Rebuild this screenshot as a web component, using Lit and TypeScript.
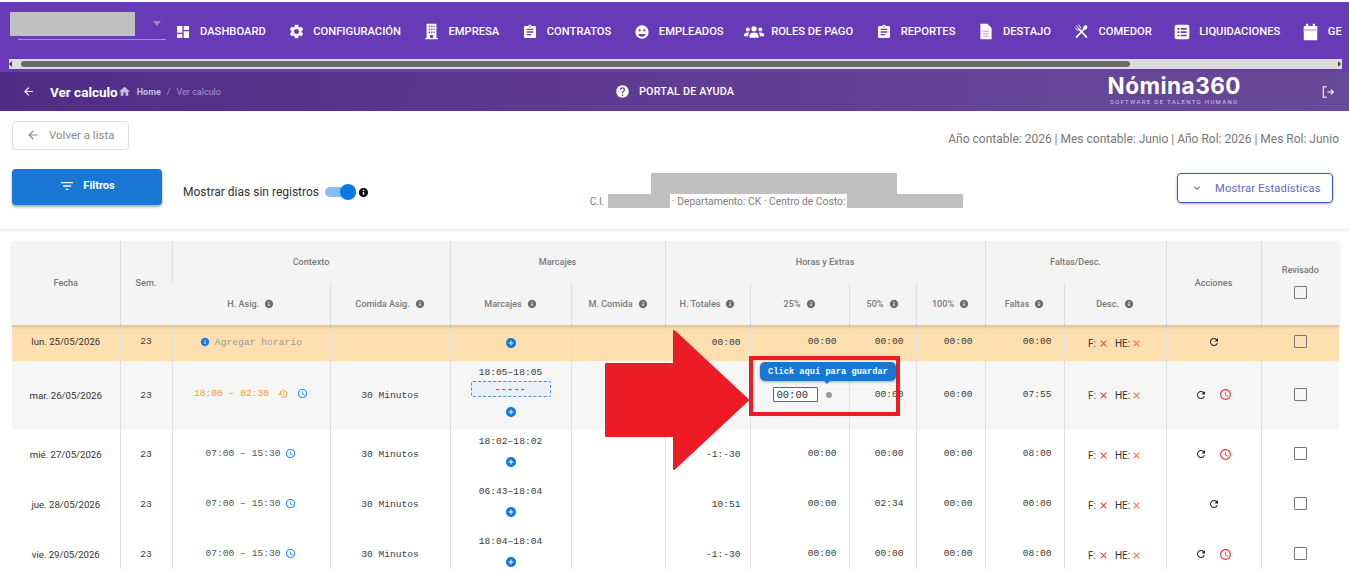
import {LitElement, html, css, svg} from 'lit';
import {customElement} from 'lit/decorators.js';

const P = {
  dashboard: 'M3 13h8V3H3v10zm0 8h8v-6H3v6zm10 0h8V11h-8v10zm0-18v6h8V3h-8z',
  cog: 'M19.14 12.94c.04-.3.06-.61.06-.94 0-.32-.02-.64-.07-.94l2.03-1.58a.49.49 0 0 0 .12-.61l-1.92-3.32a.488.488 0 0 0-.59-.22l-2.39.96c-.5-.38-1.03-.7-1.62-.94l-.36-2.54a.484.484 0 0 0-.48-.41h-3.84c-.24 0-.43.17-.47.41l-.36 2.54c-.59.24-1.13.57-1.62.94l-2.39-.96c-.22-.08-.47 0-.59.22L2.74 8.87c-.12.21-.08.47.12.61l2.03 1.58c-.05.3-.09.63-.09.94s.02.64.07.94l-2.03 1.58a.49.49 0 0 0-.12.61l1.92 3.32c.12.22.37.29.59.22l2.39-.96c.5.38 1.03.7 1.62.94l.36 2.54c.05.24.24.41.48.41h3.84c.24 0 .44-.17.47-.41l.36-2.54c.59-.24 1.13-.56 1.62-.94l2.39.96c.22.08.47 0 .59-.22l1.92-3.32c.12-.22.07-.47-.12-.61l-2.01-1.58zM12 15.6c-1.98 0-3.6-1.62-3.6-3.6s1.62-3.6 3.6-3.6 3.6 1.62 3.6 3.6-1.62 3.6-3.6 3.6z',
  building: 'M5 1h14v20h2v2H3v-2h2V1zm3 3v2h2V4H8zm3.5 0v2h2V4h-2zM15 4v2h1.500V4H15zM8 8v2h2V8H8zm3.500 0v2h2V8h-2zM15 8v2h1.500V8H15zm-7 4v2h2v-2H8zm3.500 0v2h2v-2h-2zm3.500 0v2h1.500v-2H15zm-5 5v4h4v-4h-4z',
  clipboard: 'M19 3h-4.180C14.400 1.840 13.300 1 12 1c-1.300 0-2.400.840-2.820 2H5c-1.100 0-2 .900-2 2v14c0 1.100.900 2 2 2h14c1.100 0 2-.900 2-2V5c0-1.100-.900-2-2-2zm-7 0c.550 0 1 .450 1 1s-.450 1-1 1-1-.450-1-1 .450-1 1-1zm2 14H7v-2h7v2zm3-4H7v-2h10v2zm0-4H7V7h10v2z',
  face: 'M12 2a10 10 0 1 0 0 20 10 10 0 0 0 0-20zM8.500 8a1.700 1.700 0 1 1 0 3.400 1.700 1.700 0 0 1 0-3.400zm7 0a1.700 1.700 0 1 1 0 3.400 1.700 1.700 0 0 1 0-3.400zM12 19c-2.600 0-4.800-1.600-5.700-4h11.400c-.9 2.400-3.100 4-5.700 4z',
  users: 'M12 5a3.200 3.200 0 1 1 0 6.400A3.200 3.200 0 0 1 12 5zM4.500 6.500a2.500 2.500 0 1 1 0 5 2.500 2.500 0 0 1 0-5zm15 0a2.500 2.500 0 1 1 0 5 2.500 2.500 0 0 1 0-5zM12 12.500c3 0 5.500 1.500 5.500 3.800V19h-11v-2.700c0-2.300 2.500-3.800 5.500-3.800zM4.500 12.500c.7 0 1.300.1 1.900.3-1 .8-1.400 2-1.400 3.500V17H0v-1.500c0-1.800 2-3 4.500-3zm15 0c2.500 0 4.500 1.200 4.500 3V17h-5v-.7c0-1.500-.4-2.700-1.400-3.500.6-.2 1.200-.3 1.900-.3z',
  help: 'M12 2C6.480 2 2 6.480 2 12s4.480 10 10 10 10-4.480 10-10S17.520 2 12 2zm1 17h-2v-2h2v2zm2.070-7.750l-.900.920C13.450 12.900 13 13.500 13 15h-2v-.500c0-1.100.450-2.100 1.170-2.830l1.240-1.260c.370-.360.590-.860.590-1.410 0-1.100-.900-2-2-2s-2 .900-2 2H8c0-2.210 1.790-4 4-4s4 1.790 4 4c0 .880-.360 1.680-.930 2.250z',
  refresh: 'M17.650 6.350C16.200 4.900 14.210 4 12 4c-4.420 0-7.990 3.580-7.990 8s3.570 8 7.990 8c3.730 0 6.840-2.550 7.730-6h-2.080c-.820 2.330-3.040 4-5.650 4-3.310 0-6-2.690-6-6s2.690-6 6-6c1.660 0 3.140.690 4.220 1.780L13 11h7V4l-2.350 2.350z',
  clock: 'M11.990 2C6.470 2 2 6.480 2 12s4.470 10 9.990 10C17.520 22 22 17.520 22 12S17.520 2 11.990 2zM12 20c-4.420 0-8-3.580-8-8s3.580-8 8-8 8 3.580 8 8-3.580 8-8 8zm.5-13H11v6l5.250 3.150.750-1.230-4.500-2.670z',
  history: 'M13 3a9 9 0 0 0-9 9H1l3.890 3.890.070.140L9 12H6c0-3.870 3.130-7 7-7s7 3.130 7 7-3.130 7-7 7c-1.930 0-3.680-.790-4.940-2.060l-1.420 1.420A8.954 8.954 0 0 0 13 21a9 9 0 0 0 0-18zm-1 5v5l4.280 2.540.720-1.210-3.500-2.080V8H12z',
  filter: 'M10 18h4v-2h-4v2zM3 6v2h18V6H3zm3 7h12v-2H6v2z',
  home: 'M10 20v-6h4v6h5v-8h3L12 3 2 12h3v8z',
  back: 'M20 11H7.830l5.590-5.590L12 4l-8 8 8 8 1.410-1.410L7.830 13H20v-2z',
  plus: 'M12 2C6.480 2 2 6.480 2 12s4.480 10 10 10 10-4.480 10-10S17.520 2 12 2zm5 11h-4v4h-2v-4H7v-2h4V7h2v4h4v2z',
  info: 'M12 2C6.480 2 2 6.480 2 12s4.480 10 10 10 10-4.480 10-10S17.520 2 12 2zm1.500 15h-3v-6h3v6zm0-8h-3V6.500h3V9z',
  close: 'M19 6.410L17.590 5 12 10.590 6.410 5 5 6.410 10.590 12 5 17.590 6.410 19 12 13.410 17.590 19 19 17.590 13.410 12z',
  chevron: 'M16.590 8.590L12 13.170 7.410 8.590 6 10l6 6 6-6z',
};

const icon = (d: string, size = 12, cls = '') =>
  html`<svg class="ico ${cls}" width=${size} height=${size} viewBox="0 0 24 24" fill="currentColor" fill-rule="evenodd">${svg`<path d=${d}></path>`}</svg>`;

const comedorIcon = html`<svg class="ico" width="15" height="15" viewBox="0 0 24 24" fill="none" stroke="currentColor" stroke-width="2.6" stroke-linecap="round">
  ${svg`<path d="M4 21L17 7"></path><path d="M20 21L8 8"></path><ellipse cx="18" cy="5.500" rx="3" ry="3.800" fill="currentColor" stroke="none" transform="rotate(40 18 5.500)"></ellipse><path d="M4 3l5 6M7.500 1.500l3.500 5M2 6l5 5" stroke-width="1.600"></path>`}
</svg>`;

const docIcon = html`<svg class="ico" width="14" height="17" viewBox="0 0 20 24">
  ${svg`<path d="M2 1h10l6 6v16H2z" fill="#fff"></path><path d="M6 11h8v1.500H6zM6 14.500h8V16H6zM6 18h8v1.500H6z" fill="#b39ddb"></path>`}
</svg>`;

const listIcon = html`<svg class="ico" width="16" height="16" viewBox="0 0 24 24">
  ${svg`<rect x="1" y="1" width="22" height="22" rx="3" fill="#fff"></rect><path d="M5 6h3v2.500H5zM10 6h9v2.500h-9zM5 11h3v2.500H5zM10 11h9v2.500h-9zM5 16h3v2.500H5zM10 16h9v2.500h-9z" fill="#673ab7"></path>`}
</svg>`;

const calIcon = html`<svg class="ico" width="15" height="18" viewBox="0 0 20 24">
  ${svg`<path d="M1 4h3V1h3v3h6V1h3v3h3v19H1z" fill="#fff"></path><rect x="1" y="8" width="18" height="3" fill="#d1c4e9"></rect>`}
</svg>`;

const navItems = [
  {label: 'Dashboard', ico: icon(P.dashboard, 16)},
  {label: 'Configuración', ico: icon(P.cog, 17)},
  {label: 'Empresa', ico: icon(P.building, 17)},
  {label: 'Contratos', ico: icon(P.clipboard, 16)},
  {label: 'Empleados', ico: icon(P.face, 16)},
  {label: 'Roles de pago', ico: icon(P.users, 20)},
  {label: 'Reportes', ico: icon(P.clipboard, 16)},
  {label: 'Destajo', ico: docIcon},
  {label: 'Comedor', ico: comedorIcon},
  {label: 'Liquidaciones', ico: listIcon},
  {label: 'Ge', ico: calIcon},
];

const cols = [108, 52, 158, 120, 121, 94, 85, 99, 67, 69, 79, 102, 95, 78];

type Row = {
  date: string;
  cls: string;
  horario: string;
  marc: string;
  total: string;
  p25: string;
  p50: string;
  p100: string;
  faltas: string;
  alarm: boolean;
};

const rows: Row[] = [
  {date: 'lun. 25/05/2026', cls: 'warn', horario: '', marc: '', total: '00:00', p25: '00:00', p50: '00:00', p100: '00:00', faltas: '00:00', alarm: false},
  {date: 'mar. 26/05/2026', cls: 'edit', horario: '18:00 – 02:30', marc: '18:05–18:05', total: '-1:-30', p25: '', p50: '00:00', p100: '00:00', faltas: '07:55', alarm: true},
  {date: 'mié. 27/05/2026', cls: '', horario: '07:00 – 15:30', marc: '18:02–18:02', total: '-1:-30', p25: '00:00', p50: '00:00', p100: '00:00', faltas: '08:00', alarm: true},
  {date: 'jue. 28/05/2026', cls: '', horario: '07:00 – 15:30', marc: '06:43–18:04', total: '10:51', p25: '00:00', p50: '02:34', p100: '00:00', faltas: '00:00', alarm: false},
  {date: 'vie. 29/05/2026', cls: '', horario: '07:00 – 15:30', marc: '18:04–18:04', total: '-1:-30', p25: '00:00', p50: '00:00', p100: '00:00', faltas: '08:00', alarm: true},
];

@customElement('app-root')
export class AppRoot extends LitElement {
  static styles = css`
    :host {
      display: block;
      position: relative;
      height: 569px;
      overflow: hidden;
      background: #fff;
      font-family: Roboto, 'Liberation Sans', sans-serif;
      color: #333;
    }
    .ico { display: block; flex: none; }

    /* top menu */
    .top { margin-top: 2px; height: 70px; background: #673ab7; color: #fff; overflow: hidden; }
    .menu { display: flex; align-items: center; height: 57px; padding-left: 10px; white-space: nowrap; }
    .tenant { width: 156px; flex: none; height: 28px; position: relative; margin-right: 10px; margin-top: -9px; }
    .tenant-box { width: 125px; height: 24px; background: #c0c0c0; }
    .tenant-caret { position: absolute; left: 143px; top: 9px; border: 4px solid transparent; border-top: 5px solid #9a86c6; }
    .tenant-line { position: absolute; left: 8px; right: 0; bottom: 0; height: 1px; background: #a48fd0; }
    .nav { display: flex; align-items: center; gap: 23.500px; margin-top: 2px; }
    .nav-item { display: flex; align-items: center; font-size: 11.200px; font-weight: 500; text-transform: uppercase; }
    .ibox { display: flex; justify-content: center; width: 14px; margin-right: 10px; }
    .bar { margin: 0 7px 0 9px; height: 10px; background: #dcdcdc; padding: 2px 0; box-sizing: border-box; display: flex; align-items: center; position: relative; }
    .bar-thumb { margin-left: 12px; width: 1109px; height: 6px; border-radius: 3px; background: #6a6a6a; }
    .bar-l, .bar-r { position: absolute; top: 2px; border: 3px solid transparent; }
    .bar-l { left: 0; border-right: 3px solid #444; border-left: 0; }
    .bar-r { right: 1px; border-left: 3px solid #444; border-right: 0; }

    /* page title bar */
    .sub { height: 39px; display: flex; align-items: center; padding: 0 14px 0 22px; color: #fff; position: relative;
      background: linear-gradient(100deg, #4f2c86 0%, #5f3d92 50%, #684a98 100%); }
    .title { font-size: 13.500px; font-weight: 700; margin-left: 15px; }
    .crumb { display: flex; align-items: center; font-size: 9px; color: #c9bddf; }
    .crumb b { margin: 0 6px; font-weight: 700; }
    .crumb span { color: #a695c6; }
    .crumb i { font-style: normal; margin-right: 6px; color: #a695c6; }
    .portal { display: flex; align-items: center; gap: 9px; font-size: 10.800px; font-weight: 500; letter-spacing: .2px; position: absolute; left: 615px; }
    .logo { margin-left: auto; margin-right: 80px; display: flex; flex-direction: column; align-items: center; margin-top: -3px; }
    .logo-name { font-family: Inter, sans-serif; font-size: 22.500px; line-height: 24px; font-weight: 700; letter-spacing: .5px; }
    .logo-tag { font-size: 6px; letter-spacing: 1.320px; color: #cfc4e2; line-height: 8px; }

    /* toolbar */
    .row1 { display: flex; align-items: center; justify-content: space-between; padding: 10px 10px 0 12px; }
    .back-btn { display: flex; align-items: center; gap: 9px; box-sizing: border-box; width: 117px; height: 29px; padding: 0 0 2px 13px; border: 1px solid #dedede; border-radius: 4px; font-size: 11.500px; color: #8a8a8a; }
    .period { font-size: 12px; color: #777; margin-top: 7px; }
    .row2 { display: flex; justify-content: space-between; align-items: flex-start; box-sizing: border-box; height: 80px; padding: 19px 16px 0 12px; border-bottom: 1px solid #eee; box-shadow: 0 1px 2px rgba(0,0,0,.08); }
    .left { display: flex; width: 358px; flex: none; }
    .filtros { display: flex; align-items: center; justify-content: center; gap: 8px; flex: none; box-sizing: border-box; width: 150px; height: 36px; padding-bottom: 3px; border-radius: 4px; background: #1976d2; color: #fff; font-size: 11px; font-weight: 700; box-shadow: 0 2px 3px rgba(0,0,0,.35); }
    .toggle { display: flex; align-items: center; margin: 10px 0 0 21px; font-size: 12px; color: #333; white-space: nowrap; }
    .switch { width: 31px; height: 10px; border-radius: 5px; background: #85bdf2; margin-left: 6px; position: relative; }
    .knob { position: absolute; right: 0; top: -3px; width: 16px; height: 16px; border-radius: 50%; background: #0b78e3; }
    .toggle .ico { margin-left: 2px; color: #111; }
    .who { display: flex; flex-direction: column; align-items: center; margin-left: 6px; margin-top: 4px; }
    .who-name { width: 246px; height: 21px; background: #c0c0c0; margin-left: -6px; }
    .who-line { display: flex; align-items: center; font-size: 10.300px; color: #7d7d7d; height: 14px; white-space: pre; }
    .mask { background: #c0c0c0; height: 14px; display: block; }
    .mask.ci { width: 62px; margin-left: 3px; }
    .mask.cc { width: 116px; margin-left: 2px; }
    .stats { display: flex; align-items: center; gap: 12px; box-sizing: border-box; width: 156px; height: 30px; margin-top: 4px; padding-left: 13px; border: 1px solid #3f51b5; border-radius: 4px; color: #5c6bc0; font-size: 11.200px; letter-spacing: .15px; box-shadow: 0 1px 3px rgba(0,0,0,.3); }

    /* table */
    table { margin: 11px 0 0 12px; width: 1327px; border-collapse: collapse; table-layout: fixed; }
    thead { background: #f4f4f4; position: relative; z-index: 1; box-shadow: 0 2px 3px rgba(0,0,0,.15); }
    th { font-size: 9.100px; font-weight: 500; color: #7a7a7a; height: 42px; padding: 0; border-left: 1px solid #e0e0e0; box-sizing: border-box; }
    th:first-child { border-left: 0; }
    .th-i { display: inline-flex; align-items: center; gap: 5px; }
    .th-i .ico { color: #6d6d6d; }
    .rev { display: flex; flex-direction: column; align-items: center; gap: 11px; margin-top: -3px; }
    td { padding: 0; border-left: 1px solid #e0e0e0; text-align: center; font-size: 9.600px; color: #333; box-sizing: border-box; }
    td:first-child { border-left: 0; }
    tr.warn td { background: #fddfb0; }
    tr.edit td { background: #f6f6f6; }
    tbody tr td { height: 50px; }
    tr.warn td { height: 36px; }
    tr.edit td { height: 69px; }
    td.c { padding-bottom: 1px; }
    tr.warn td.c { padding-bottom: 3px; }
    .mono { font-family: 'Liberation Mono', 'Courier New', monospace; font-size: 9.600px; color: #3a3a3a; }
    td.num { text-align: right; padding: 0 12px 3px 0; }
    td.tot { text-align: right; padding: 0 9px 1px 0; }
    .sch { display: flex; align-items: center; justify-content: center; gap: 5px; margin-bottom: 4px; color: #555; }
    .sch.late { color: #f59a23; gap: 9px; }
    .clk { color: #1a82e8; }
    .his { color: #f59a23; }
    .add { display: flex; align-items: center; justify-content: center; color: #9a9a9a; letter-spacing: .05px; padding-bottom: 2px; }
    .add .ico { color: #0b78e3; margin-right: -1px; }
    .stack { display: flex; flex-direction: column; align-items: center; gap: 9px; margin-top: -6px; }
    tr.warn .stack { margin-top: 0; }
    .plus { color: #0b78e3; display: flex; justify-content: center; }
    .dash { box-sizing: border-box; width: 80px; height: 16px; margin-top: -6px; border: 1px dashed #3b94e6; border-radius: 2px; background: #ecf0f6; color: #e53935; display: flex; align-items: center; justify-content: center; font-size: 9.600px; font-weight: 700; letter-spacing: .5px; }
    .dash b { color: #555; }
    .fh { display: flex; align-items: center; justify-content: center; font-size: 10px; color: #333; }
    .fh .x1 { color: #e53935; margin: 0 6px 0 2px; }
    .fh .x2 { color: #ef6a4e; margin-left: 1px; }
    .acts { display: flex; align-items: center; justify-content: center; gap: 12px; color: #222; padding-bottom: 2px; }
    .acts .red { color: #e53935; }
    .box { display: block; box-sizing: border-box; width: 13px; height: 13px; margin: auto; border: 1.500px solid #777; border-radius: 1px; }
    td.chk { padding-bottom: 3px; }
    .edit-cell { display: flex; align-items: center; padding: 0 0 2px 22px; }
    input { box-sizing: border-box; width: 45px; height: 15px; padding: 0 0 0 3px; border: 1px solid #1976d2; border-radius: 1px; background: #fff; font-family: 'Liberation Mono', monospace; font-size: 10.500px; color: #333; outline: none; }
    .dot { width: 6px; height: 6px; margin-left: 8px; border-radius: 50%; background: #9a9a9a; }

    /* annotations over the table */
    .tip { position: absolute; left: 760px; top: 362px; width: 136px; height: 19px; border-radius: 5px; background: #1976d2; color: #fff; font-family: 'Liberation Mono', monospace; font-size: 8.700px; font-weight: 700; line-height: 20px; text-align: center; box-shadow: 0 1px 3px rgba(0,0,0,.3); }
    .tip::after { content: ''; position: absolute; left: 64px; top: 19px; border: 3px solid transparent; border-top: 3px solid #1976d2; }
    .frame { position: absolute; left: 749px; top: 356px; width: 151px; height: 60px; box-sizing: border-box; border: 4.500px solid #ed1c24; pointer-events: none; }
    .arrow { position: absolute; left: 600px; top: 326px; }
  `;

  private infoDot() {
    return icon(P.info, 10);
  }

  private renderRow(r: Row) {
    const warn = r.cls === 'warn';
    return html`<tr class=${r.cls}>
      <td class="c">${r.date}</td>
      <td class="mono c">23</td>
      <td class="mono">
        ${warn
          ? html`<div class="add">${icon(P.info, 10)}&nbsp;Agregar horario</div>`
          : html`<div class="sch ${r.cls === 'edit' ? 'late' : ''}">
              ${r.horario}
              ${r.cls === 'edit' ? html`<span class="his">${icon(P.history, 10)}</span>` : ''}
              <span class="clk">${icon(P.clock, 11)}</span>
            </div>`}
      </td>
      <td class="mono c">${warn ? '' : '30 Minutos'}</td>
      <td class="mono">
        <div class="stack">
          ${r.marc ? html`<div>${r.marc}</div>` : ''}
          ${r.cls === 'edit' ? html`<div class="dash">--<b>-</b>--</div>` : ''}
          <div class="plus">${icon(P.plus, 12)}</div>
        </div>
      </td>
      <td></td>
      <td class="mono tot">${r.total}</td>
      ${r.cls === 'edit'
        ? html`<td><div class="edit-cell"><input .value=${'00:00'} /><span class="dot"></span></div></td>`
        : html`<td class="mono num">${r.p25}</td>`}
      <td class="mono num">${r.p50}</td>
      <td class="mono num">${r.p100}</td>
      <td class="mono num">${r.faltas}</td>
      <td>
        <div class="fh">F:<span class="x1">${icon(P.close, 11)}</span>HE:<span class="x2">${icon(P.close, 11)}</span></div>
      </td>
      <td>
        <div class="acts">
          ${icon(P.refresh, 12)}
          ${r.alarm ? html`<span class="red">${icon(P.clock, 13)}</span>` : ''}
        </div>
      </td>
      <td class="chk"><span class="box"></span></td>
    </tr>`;
  }

  render() {
    return html`
      <div class="top">
        <div class="menu">
          <div class="tenant">
            <div class="tenant-box"></div>
            <span class="tenant-caret"></span>
            <span class="tenant-line"></span>
          </div>
          <div class="nav">
            ${navItems.map((n) => html`<div class="nav-item"><span class="ibox">${n.ico}</span><span>${n.label}</span></div>`)}
          </div>
        </div>
        <div class="bar"><span class="bar-l"></span><div class="bar-thumb"></div><span class="bar-r"></span></div>
      </div>

      <div class="sub">
        ${icon(P.back, 13)}
        <span class="title">Ver calculo</span>
        <div class="crumb">${icon(P.home, 13)}<b>Home</b><i>/</i><span>Ver calculo</span></div>
        <div class="portal">${icon(P.help, 15)}<span>PORTAL DE AYUDA</span></div>
        <div class="logo">
          <span class="logo-name">Nómina360</span>
          <span class="logo-tag">SOFTWARE DE TALENTO HUMANO</span>
        </div>
        <svg class="ico" width="14" height="14" viewBox="0 0 24 24" fill="none" stroke="currentColor" stroke-width="2">
          ${svg`<path d="M10 3H4v18h6M11 12h10M17 8l4 4-4 4"></path>`}
        </svg>
      </div>

      <div class="row1">
        <div class="back-btn">${icon(P.back, 14)}<span>Volver a lista</span></div>
        <div class="period">Año contable: 2026 | Mes contable: Junio | Año Rol: 2026 | Mes Rol: Junio</div>
      </div>

      <div class="row2">
        <div class="left">
          <div class="filtros">${icon(P.filter, 16)}<span>Filtros</span></div>
          <div class="toggle">
            Mostrar dias sin registros
            <span class="switch"><span class="knob"></span></span>
            ${icon(P.info, 11)}
          </div>
        </div>
        <div class="who">
          <div class="who-name"></div>
          <div class="who-line">C.I.<span class="mask ci"></span> · Departamento: CK · Centro de Costo:<span class="mask cc"></span></div>
        </div>
        <div class="stats">${icon(P.chevron, 12)}<span>Mostrar Estadísticas</span></div>
      </div>

      <table>
        <colgroup>${cols.map((w) => html`<col style="width:${w}px" />`)}</colgroup>
        <thead>
          <tr>
            <th rowspan="2">Fecha</th>
            <th rowspan="2">Sem.</th>
            <th colspan="2">Contexto</th>
            <th colspan="2">Marcajes</th>
            <th colspan="4">Horas y Extras</th>
            <th colspan="2">Faltas/Desc.</th>
            <th rowspan="2">Acciones</th>
            <th rowspan="2"><div class="rev">Revisado<span class="box"></span></div></th>
          </tr>
          <tr>
            ${['H. Asig.', 'Comida Asig.', 'Marcajes', 'M. Comida', 'H. Totales', '25%', '50%', '100%', 'Faltas', 'Desc.'].map(
              (h) => html`<th><span class="th-i">${h} ${this.infoDot()}</span></th>`
            )}
          </tr>
        </thead>
        <tbody>${rows.map((r) => this.renderRow(r))}</tbody>
      </table>

      <svg class="arrow" width="152" height="146" viewBox="0 0 152 146">
        ${svg`<path d="M6 38H74V5L148 74L74 143V110H6Z" fill="#ed1c24" stroke="#ed1c24" stroke-width="2" stroke-linejoin="round"></path>`}
      </svg>
      <div class="frame"></div>
      <div class="tip">Click aquí para guardar</div>
    `;
  }
}
